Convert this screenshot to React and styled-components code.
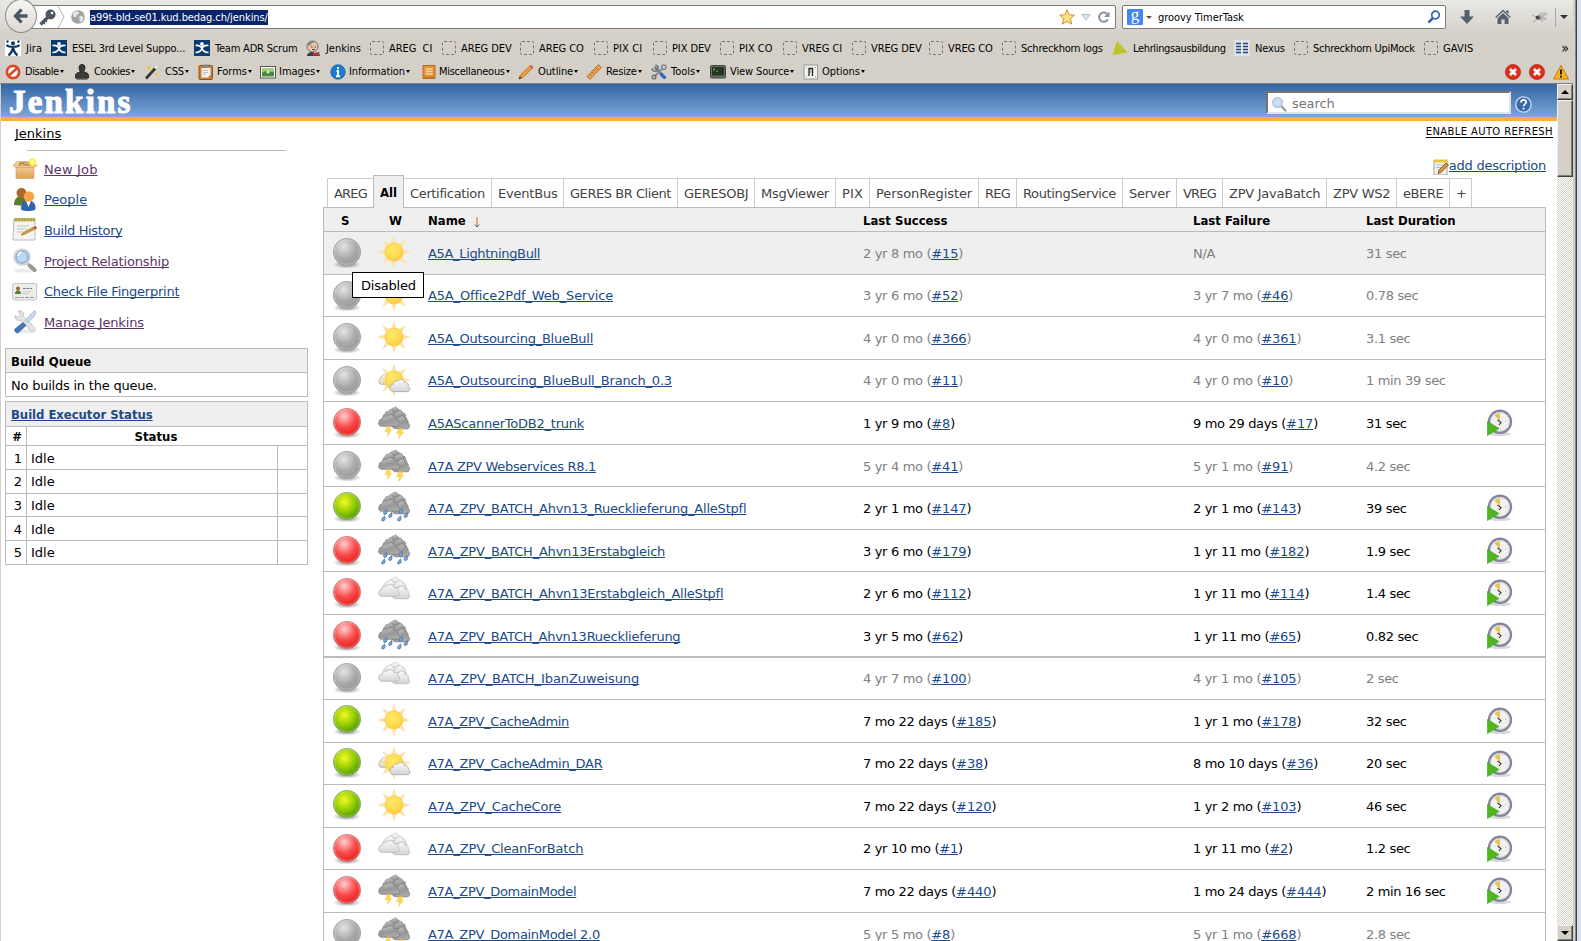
import React from "react";
import styled, { createGlobalStyle, css } from "styled-components";

const UI_FONT = `"DejaVu Sans Condensed", "DejaVu Sans", sans-serif`;
const PAGE_FONT = `Verdana, "DejaVu Sans", sans-serif`;

const GlobalStyle = createGlobalStyle`
  * { box-sizing: border-box; }
  html, body { margin: 0; padding: 0; overflow: hidden; }
  body { background: #d4d0c8; }
  svg { display: block; flex: none; }
`;

const strong = css`
  font-family: ${UI_FONT};
  font-weight: bold;
  letter-spacing: 0;
`;

/* ---------- window frame ---------- */
const Window = styled.div`
  display: flex;
  width: 1581px;
  height: 941px;
  overflow: hidden;
  background: #d4d0c8;
`;
const Browser = styled.div`
  width: 1573px;
  display: flex;
  flex-direction: column;
`;
const WindowEdge = styled.div`
  width: 8px;
  border-left: 2px solid #d4d0c8;
  background: linear-gradient(to right, #8d8a84 0 1px, #404040 1px 2px, #d6def2 2px);
`;

/* ---------- navigation bar ---------- */
const NavBar = styled.div`
  height: 36px;
  flex: none;
  display: flex;
  align-items: flex-start;
  background: linear-gradient(#e9e8e5, #d4d0c8);
  font: 11px ${UI_FONT};
  color: #000;
`;
const BackButton = styled.div`
  width: 32px;
  height: 34px;
  margin: -1px -17px 0 5px;
  border-radius: 50%;
  border: 1px solid #8c8a86;
  background: linear-gradient(#f7f6f5, #dddad5);
  display: flex;
  align-items: center;
  justify-content: center;
  z-index: 1;
`;
const Field = styled.div`
  height: 24px;
  margin-top: 5px;
  border: 1px solid #7c7c7c;
  border-radius: 2px;
  background: #fff;
  display: flex;
  align-items: center;
  width: ${(p) => p.$w}px;
  padding: ${(p) => p.$pad};
`;
const Selected = styled.span`
  background: #0a246a;
  color: #fff;
  line-height: 15px;
  height: 15px;
  letter-spacing: -0.08px;
  margin-left: 3px;
  white-space: nowrap;
`;
const Query = styled.span`
  flex: 1;
  margin-left: 6px;
  letter-spacing: -0.05px;
`;
const NavIcons = styled.div`
  display: flex;
  align-items: center;
  height: 34px;
  margin-left: 13px;
`;
const Gap = styled.span`
  flex: ${(p) => (p.$w ? `0 0 ${p.$w}px` : 1)};
`;
const Divider = styled.span`
  width: 1px;
  height: 19px;
  background: #a9a6a0;
`;

/* ---------- bookmark and developer bars ---------- */
const Strip = styled.div`
  height: ${(p) => p.$h}px;
  flex: none;
  display: flex;
  align-items: center;
  padding-left: 5px;
  background: #d4d0c8;
  font: 11px ${UI_FONT};
  color: #000;
`;
const StripItem = styled.div`
  width: ${(p) => p.$w}px;
  flex: none;
  display: flex;
  align-items: center;
  white-space: pre;
  letter-spacing: ${(p) => p.$track || 0}px;
`;
const Slot = styled.span`
  width: ${(p) => p.$w}px;
  flex: none;
  display: flex;
`;
const Caret = styled.span`
  margin-left: 1px;
  border: 2.5px solid transparent;
  border-top: 3px solid #000;
  border-bottom: 0;
`;
const Blank = styled.span`
  width: 14px;
  height: 14px;
  border: 1px dashed #777;
  border-radius: 2px;
`;
const More = styled.span`
  margin-left: auto;
  margin-right: 4px;
  font-size: 14px;
  line-height: 14px;
`;

/* ---------- viewport ---------- */
const Viewport = styled.div`
  flex: 1;
  min-height: 0;
  display: flex;
  border-top: 1px solid #808080;
`;
const Page = styled.div`
  width: 1557px;
  border-left: 1px solid #d4d0c8;
  background: #fff;
  overflow: hidden;
  font: 13px ${PAGE_FONT};
  color: #000;
  position: relative;
`;
const ScrollBar = styled.div`
  width: 16px;
  display: flex;
  flex-direction: column;
  background: repeating-conic-gradient(#fff 0 25%, #d4d0c8 0 50%) 0 0 / 2px 2px;
`;
const raised = css`
  background: #d4d0c8;
  border: 1px solid;
  border-color: #f4f2ee #404040 #404040 #f4f2ee;
  box-shadow: inset -1px -1px #808080;
`;
const ScrollButton = styled.div`
  ${raised}
  height: 16px;
  flex: none;
  display: flex;
  align-items: center;
  justify-content: center;
`;
const Thumb = styled.div`
  ${raised}
  height: 77px;
  margin-bottom: auto;
`;
const Arrow = styled.span`
  border: 4px solid transparent;
  ${(p) => (p.$up ? "border-bottom-color: #000; margin-top: -4px;" : "border-top-color: #000; margin-bottom: -4px;")}
`;

const Header = styled.header`
  height: 37px;
  border-bottom: 4px solid #fcaf3e;
  background: linear-gradient(#3465a4, #729fcf 88%, #8fa3da);
  display: flex;
  align-items: flex-start;
`;
const Logo = styled.div`
  padding-left: 8px;
  font: bold 33px/37px "Liberation Serif", serif;
  height: 33px;
  letter-spacing: 2.2px;
  color: #fff;
  -webkit-text-stroke: 1.1px #fff;
  flex: 1;
`;
const SearchBox = styled.div`
  width: 245px;
  height: 23px;
  margin-top: 7px;
  background: #fff;
  border: 2px solid;
  border-color: #75736e #e6e3dd #e6e3dd #75736e;
  display: flex;
  align-items: center;
  padding: 2px 0 0 3px;
  gap: 5px;
  line-height: 17px;
  letter-spacing: -0.1px;
  color: #777;
`;
const HelpSlot = styled.div`
  margin: 12px 25px 0 4px;
`;

const Crumbs = styled.div`
  height: 29px;
  display: flex;
  justify-content: space-between;
  padding: 0 4px 0 14px;
`;
const Link = styled.a`
  color: ${(p) => p.$color || "#204a87"};
  text-decoration: underline;
  text-decoration-thickness: 1px;
  text-underline-offset: 1px;
  text-decoration-skip-ink: none;
  white-space: nowrap;
  letter-spacing: ${(p) => p.$track || 0}px;
`;
const CrumbLink = styled(Link)`
  line-height: 25px;
`;
const RefreshLink = styled(Link)`
  font-size: 10px;
  line-height: 21px;
  text-underline-offset: 2px;
`;

const Columns = styled.div`
  display: flex;
`;
const Side = styled.aside`
  width: 322px;
  flex: none;
`;
const Rule = styled.div`
  height: 1px;
  width: 259px;
  margin-left: 26px;
  background: #bbb;
`;
const Tasks = styled.div`
  padding: 3px 0 0 11px;
  height: 197px;
`;
const Task = styled.div`
  height: 30.6px;
  display: flex;
  align-items: center;
  gap: 6px;
`;

const Panel = styled.section`
  width: 303px;
  margin: 0 0 4px 4px;
  border: 1px solid #bbb;
`;
const PanelHead = styled.div`
  ${strong}
  height: ${(p) => p.$h}px;
  background: #efefef;
  border-bottom: 1px solid #bbb;
  padding: 1px 0 0 5px;
  display: flex;
  align-items: center;
`;
const PanelText = styled.div`
  height: 23px;
  padding: 2px 0 0 5px;
  display: flex;
  align-items: center;
  letter-spacing: -0.22px;
`;
const ExecRow = styled.div`
  display: grid;
  grid-template-columns: ${(p) => (p.$head ? "20px 1fr" : "20px 1fr 30px")};
  height: ${(p) => p.$h}px;
  line-height: 15px;
  ${(p) => p.$head && strong}
  & + & { border-top: 1px solid #bbb; }
`;
const ExecCell = styled.div`
  border-left: ${(p) => (p.$first ? 0 : 1)}px solid #bbb;
  padding: ${(p) => p.$top}px ${(p) => (p.$center ? 26 : 4)}px 0 4px;
  text-align: ${(p) => (p.$first ? "right" : p.$center ? "center" : "left")};
`;

const Main = styled.main`
  width: 1223px;
`;
const Description = styled.div`
  height: 25px;
  display: flex;
  justify-content: flex-end;
  padding-top: 9px;
  line-height: 13px;
`;
const Tabs = styled.div`
  height: 32px;
  display: flex;
  align-items: flex-end;
  padding-left: 4px;
`;
const Tab = styled.div`
  width: ${(p) => p.$w}px;
  height: 29px;
  border-top: 1px solid #ccc;
  border-left: ${(p) => (p.$bare ? 0 : 1)}px solid #ccc;
  border-right: ${(p) => (p.$last ? 1 : 0)}px solid #ccc;
  padding: 0 0 0 6px;
  display: flex;
  align-items: center;
  white-space: nowrap;
  color: #444;
  letter-spacing: ${(p) => p.$track || 0}px;
  ${(p) =>
    p.$active &&
    css`
      ${strong}
      height: 33px;
      margin-bottom: -1px;
      border: 1px solid #bbb;
      border-bottom: 0;
      background: #efefef;
      color: #000;
      z-index: 1;
    `}
`;
const Table = styled.div`
  border: 1px solid #bbb;
  border-bottom: 0;
`;
const cols = css`
  display: grid;
  grid-template-columns: 47px 57px 435px 330px 173px 120px 1fr;
`;
const HeadRow = styled.div`
  ${cols}
  ${strong}
  align-items: center;
  height: 24px;
  padding-top: 1px;
  background: #efefef;
  border-bottom: 1px solid #bbb;
`;
const HeadCell = styled.div`
  padding-left: ${(p) => p.$pad || 0}px;
  display: flex;
  gap: 8px;
`;
const JobRow = styled.div`
  ${cols}
  height: ${(p) => p.$h}px;
  border-bottom: ${(p) => p.$line || 1}px solid #bbb;
  background: ${(p) => (p.$hot ? "#efefef" : "#fff")};
  color: ${(p) => (p.$off ? "#808080" : "#000")};
`;
const IconCell = styled.div`
  padding: ${(p) => p.$top}px 0 0 ${(p) => p.$left}px;
`;
const Cell = styled.div`
  padding-top: ${(p) => p.$top}px;
  line-height: 15px;
  white-space: nowrap;
  letter-spacing: -0.33px;
`;
const Tip = styled.div`
  position: absolute;
  left: 351px;
  top: 188px;
  width: 72px;
  height: 26px;
  border: 1px solid #000;
  background: #fff;
  display: flex;
  align-items: center;
  padding: 1px 0 0 8px;
  letter-spacing: -0.2px;
  z-index: 2;
`;

/* ---------- drawings ---------- */
const HiddenSvg = styled.svg`
  position: absolute;
`;
const Defs = () => (
  <HiddenSvg width="0" height="0">
    <defs>
      <radialGradient id="grey" cx=".38" cy=".3" r=".75">
        <stop offset="0" stopColor="#e4e4e4" /><stop offset=".6" stopColor="#a8a8a8" /><stop offset="1" stopColor="#969696" />
      </radialGradient>
      <radialGradient id="red" cx=".4" cy=".28" r=".75">
        <stop offset="0" stopColor="#ffd0d0" /><stop offset=".55" stopColor="#f94a4a" /><stop offset="1" stopColor="#e31e1e" />
      </radialGradient>
      <radialGradient id="green" cx=".4" cy=".35" r=".72">
        <stop offset="0" stopColor="#f4f822" /><stop offset=".5" stopColor="#97cf06" /><stop offset="1" stopColor="#439000" />
      </radialGradient>
      <radialGradient id="shade">
        <stop offset="0" stopColor="#000" stopOpacity=".5" /><stop offset="1" stopColor="#000" stopOpacity="0" />
      </radialGradient>
      <radialGradient id="sun" cx=".4" cy=".35" r=".7">
        <stop offset="0" stopColor="#ffe96b" /><stop offset=".7" stopColor="#fed94c" /><stop offset="1" stopColor="#fdc040" />
      </radialGradient>
      <linearGradient id="light" x2="0" y2="1">
        <stop offset="0" stopColor="#fafafa" /><stop offset="1" stopColor="#d4d4d4" />
      </linearGradient>
      <linearGradient id="dark" x1=".1" x2=".5" y2="1">
        <stop offset="0" stopColor="#cacac8" /><stop offset=".6" stopColor="#979795" /><stop offset="1" stopColor="#aaaaa8" />
      </linearGradient>
      <linearGradient id="box" x2="0" y2="1">
        <stop offset="0" stopColor="#f3cd92" /><stop offset="1" stopColor="#d9a055" />
      </linearGradient>
    </defs>
  </HiddenSvg>
);

const Ball = ({ color }) => (
  <svg width="32" height="34" viewBox="0 0 32 34">
    <ellipse cx="16" cy="28.5" rx="14" ry="4" fill="url(#shade)" />
    <circle cx="16" cy="16" r="13.6" fill={`url(#${color})`} stroke={color === "green" ? "#8fa878" : color === "red" ? "#c98585" : "#a2a2a2"} strokeWidth=".9" />
    <circle cx="16" cy="16" r="12.4" fill="none" stroke="#fff" strokeOpacity=".28" />
  </svg>
);

const Sun = () => (
  <g>
    {[0, 45, 90, 135, 180, 225, 270, 315].map((a) => (
      <path key={a} d="M13.6 8 16 .2 18.4 8Z" fill="#fde3a4" stroke="#fbdca0" strokeWidth=".5" transform={`rotate(${a} 16 16)`} />
    ))}
    <circle cx="16" cy="16" r="9" fill="url(#sun)" stroke="#fbc65a" strokeWidth=".8" />
  </g>
);
const Puff = ({ at, fill, stroke }) => (
  <path
    transform={at}
    fill={`url(#${fill})`}
    stroke={stroke}
    strokeWidth=".8"
    d="M4 12.5C.8 12.5-.2 10 .8 8.2.8 6.2 2 5.2 3.6 5.6 3.4 3 6 1.6 7.8 2.6 9.4-.2 14 .4 14.4 3.8 17 3.4 18.6 5.4 18 7.6 20.6 9 19.8 12.5 17 12.5Z"
  />
);
const Clouds = ({ fill, stroke }) => (
  <g>
    <Puff at="translate(11 .4) scale(.6 .7)" fill={fill} stroke={stroke} />
    <Puff at="translate(4.5 3) scale(.75 .95)" fill={fill} stroke={stroke} />
    <Puff at="translate(14 3.5) scale(.75 .95)" fill={fill} stroke={stroke} />
    <Puff at="translate(14 9) scale(.9 1.1)" fill={fill} stroke={stroke} />
    <Puff at="translate(.2 7.8) scale(1.1 1)" fill={fill} stroke={stroke} />
  </g>
);
const Weather = ({ kind }) => (
  <svg width="33" height="33" viewBox="0 0 33 33">
    {kind === "sun" && <Sun />}
    {kind === "partly" && (
      <g>
        <Puff at="translate(.4 8.5) scale(.8 .95)" fill="light" stroke="#aaa" />
        <Sun />
        <Puff at="translate(11.5 14.5) scale(1.04 1.05)" fill="light" stroke="#a8a8a8" />
      </g>
    )}
    {kind === "cloudy" && <Clouds fill="light" stroke="#b8b8b8" />}
    {(kind === "storm" || kind === "rain") && <Clouds fill="dark" stroke="#7f7f7d" />}
    {kind === "storm" && (
      <g fill="#fddb4c" stroke="#f6c052" strokeWidth=".5">
        <path d="M9.5 20.5h3.2L11.5 24h2L9.3 30.5l1-4.7H7.2Z" />
        <path d="M21 22.8h4l-1.7 3.2h2.2L20.6 32.5l1-4.8H18.5Z" />
      </g>
    )}
    {kind === "rain" && (
      <g fill="#7ea6dc" stroke="#3f6aa8" strokeWidth=".7">
        {[[4, 26], [11, 22.5], [20, 26], [26.5, 22.5], [6, 19.5], [21.5, 18.5]].map(([x, y]) => (
          <path key={x} d={`M${x + 2.6} ${y - 1}c1 2.6.3 5-1.6 5s-2.4-2 1.6-5Z`} />
        ))}
      </g>
    )}
  </svg>
);
const Schedule = () => (
  <svg width="28" height="28" viewBox="0 0 28 28">
    <ellipse cx="14" cy="25" rx="11" ry="2" fill="#000" opacity=".15" />
    <circle cx="14" cy="12.8" r="11" fill="#f1f1ee" stroke="#84849c" strokeWidth="2.4" />
    <circle cx="14" cy="12.8" r="9.4" fill="none" stroke="#d3d3dc" strokeWidth="1" />
    <path d="M14 12 8.5 6.5A8.5 8.5 0 0 1 14 4Z" fill="#e3c45c" />
    <path d="m11.500 11 3.500 2.500-2 2.500" stroke="#333" strokeWidth="1.100" fill="none" />
    <circle cx="19.5" cy="12.5" r=".4" fill="#777" /><circle cx="14" cy="19.5" r=".4" fill="#777" />
    <path d="M1.5 12.500v14l11.500-7Z" fill="#4cb81c" stroke="#3f9a1a" strokeWidth=".6" />
  </svg>
);

const taskIcons = {
  box: (
    <>
      <path d="M4 11h18v11.500H4Z" fill="url(#box)" stroke="#d0a060" strokeWidth=".6" />
      <path d="M4 11.500.8 9.500 5 5.500h16l4.200 4-3.200 2Z" fill="#efc88e" stroke="#d0a060" strokeWidth=".6" />
      <path d="M6.500 9.500 8 6.500h11l1.500 3Z" fill="#a8733a" />
      <path d="M8.500 8.800h3l1-1h5" stroke="#ecd8b8" fill="none" />
      <circle cx="20.500" cy="6" r="3.800" fill="#fff04a" /><circle cx="20.500" cy="6" r="1.800" fill="#fffbb0" />
    </>
  ),
  people: (
    <>
      <path d="M2 18c0-6 3-9 7-8.500s5 3 5 9.500Z" fill="#5b7d2c" />
      <circle cx="9.500" cy="6" r="5" fill="#a8692a" />
      <path d="M9 22.500c0-6 2-9 7-9s8 3 7.500 9c-4 2-11 2-14.500 0Z" fill="#2f66ae" />
      <path d="m14 14 2.500 6L19 14Z" fill="#fff" />
      <circle cx="17" cy="9.500" r="5.200" fill="#f5a447" />
    </>
  ),
  notes: (
    <>
      <path d="M2 2h21v21H1Z" fill="#f4f4f2" stroke="#bbb" />
      <path d="M2 1h21v3.500H2Z" fill="#c6bb62" />
      <path d="M4 1v3M7 1v3M10 1v3M13 1v3M16 1v3M19 1v3M22 1v3" stroke="#97903e" />
      <path d="M5 9h12M5 12h10M5 15h7" stroke="#c4c4c4" />
      <path d="m9 18 2.500-2.500L21.500 10l1.500 2-10.500 5.300Z" fill="#e0a23c" stroke="#97692a" strokeWidth=".7" />
      <path d="m21.500 10 2-1 1.500 2-1.500 1.500Z" fill="#d33" />
    </>
  ),
  lens: (
    <>
      <ellipse cx="12" cy="22.500" rx="10" ry="2" fill="#000" opacity=".08" />
      <path d="m15 15 3 3" stroke="#c4c6ca" strokeWidth="3.500" /><path d="m18 18 4.500 4" stroke="#999" strokeWidth="4.200" strokeLinecap="round" />
      <circle cx="10" cy="9" r="7.500" fill="#bcd6f3" stroke="#d0d2d6" strokeWidth="2.400" />
      <circle cx="10" cy="9" r="6" fill="none" stroke="#6f94c4" strokeWidth=".9" />
      <path d="M6 8a4.500 4.500 0 0 1 4-4" stroke="#fff" strokeWidth="1.500" fill="none" />
    </>
  ),
  card: (
    <>
      <rect x=".7" y="4.500" width="24" height="16.500" rx="1.500" fill="#eceeed" stroke="#c2c2c2" />
      <circle cx="6" cy="9.500" r="2" fill="#9a6a32" /><path d="M3 15c0-5 6-5 6 0Z" fill="#5e7c2c" />
      <path d="M11 9.500h10" stroke="#777" strokeWidth="1.200" strokeDasharray="2.500 .8" />
      <path d="M11 12.500h8M11 14.500h6" stroke="#ccc" />
      <path d="M3 18.500h19" stroke="#999" strokeDasharray="4 1" />
    </>
  ),
  tools: (
    <>
      <ellipse cx="13" cy="22.500" rx="11" ry="2" fill="#000" opacity=".08" />
      <path d="M6 2c4-1 6.500 2 5.500 5.500L22.500 18.500c1.500 2-1 5-3.500 3.500L9 11C5.500 12.500 2.500 10 3 6.500L6 8.500 8.500 6Z" fill="#e3e5e5" stroke="#b8b8b8" strokeWidth=".8" />
      <path d="m22.500 1.500 1.500 1.500-1.500 4-7 7-2.500-2.500 6.500-7Z" fill="#c9d9ec" stroke="#a3b4cb" strokeWidth=".8" />
      <path d="m11 13.500 3 3-7.500 7c-2 1-4.500-1-3.500-3.500Z" fill="#4677b9" stroke="#2b5796" strokeWidth=".7" />
    </>
  ),
};
const TaskIcon = ({ name }) => <svg width="26" height="26" viewBox="0 0 26 26">{taskIcons[name]}</svg>;

const smallIcons = {
  jira: (
    <>
      <rect width="16" height="16" fill="#fff" />
      <path d="M1.500 5C4 7.500 12 7.500 14.500 5M8 7.500C7.500 11 6 13.500 3.500 15.500M8 7.500c.5 3.500 2 6 4.500 8" fill="none" stroke="#123a66" strokeWidth="2.200" />
      <g fill="#123a66"><circle cx="8" cy="3.200" r="2" /><circle cx="2.500" cy="1.500" r="1.200" /><circle cx="13.500" cy="1.500" r="1.200" /></g>
    </>
  ),
  team: (
    <>
      <rect width="16" height="16" fill="#0b3a70" />
      <path d="M1.500 5.500C5 5 7 6.500 8 8c1-1.500 3-3 6.500-2.500M1.500 12.500C5 12.500 7 11 8 8.500c1 2.500 3 4 6.500 4" fill="none" stroke="#fff" strokeWidth="1.700" />
      <circle cx="8" cy="4" r="1.900" fill="#fff" />
    </>
  ),
  butler: (
    <>
      <circle cx="7.500" cy="6.500" r="5.500" fill="#e8c5a8" stroke="#555" strokeWidth=".8" />
      <path d="M2.500 5C3 1 8 0 11 2c-3 0-5 1-6 4Z" fill="#888" />
      <path d="M2 16c0-3 3-4 5-4l3 1 4-1 1 4Z" fill="#33404f" />
      <path d="m8 12 3 1.500L14 12v4l-3-1-3 1Z" fill="#d43030" />
      <path d="M6 7h1.500M9.500 7H11M7 9.500h3" stroke="#444" />
    </>
  ),
  triangle: <path d="M5 1 15.500 12.500.5 15Z" fill="#c0c22c" />,
  nexus: (
    <>
      <rect width="16" height="16" fill="#dfe3e6" />
      <path d="M2 3.500h5M2 6.500h5M2 9.500h5M2 12.500h5M9 3.500h5M9 6.500h5M9 9.500h5M9 12.500h5" stroke="#1c4a7a" strokeWidth="1.500" />
    </>
  ),
  disable: (
    <>
      <circle cx="8" cy="8" r="7.500" fill="#dc4a2a" />
      <circle cx="8" cy="8" r="4.800" fill="#fff" />
      <path d="M3.800 11.500 12 4.200" stroke="#dc4a2a" strokeWidth="2.600" />
    </>
  ),
  cookies: <path d="M5 3.500a3 3 0 0 1 6 0c0 2-1.200 3-1.200 4.500 2.500.8 4.700 1 4.700 3.500V14h-13v-2.500C1.500 9 3.700 8.800 6.200 8 6.200 6.500 5 5.500 5 3.500ZM2.500 15h11" fill="#3a3a38" stroke="#2a2a28" />,
  css: (
    <>
      <path d="M2 14.500 12.500 3" stroke="#333" strokeWidth="2.600" /><path d="m11 4.500 2-2.200" stroke="#fff" strokeWidth="2.400" />
      <path d="m5 1 .8 2.200L8 4l-2.200.8L5 7l-.8-2.200L2 4l2.200-.8ZM13 8l.6 1.600 1.600.6-1.600.6L13 12.500l-.6-1.700-1.600-.6 1.600-.6Z" fill="#f3c524" />
    </>
  ),
  forms: (
    <>
      <rect x="1" y="1.500" width="13.500" height="14" rx="1" fill="#cd7f32" stroke="#8f521b" />
      <path d="M3.500 4h9v6.500l-2.500 3H3.500Z" fill="#f2f2f0" /><rect x="5" y=".5" width="6" height="3" fill="#888" />
      <path d="M5 6.500h5M5 8.500h5M5 10.500h3" stroke="#aaa" strokeWidth=".8" />
    </>
  ),
  images: (
    <>
      <rect x=".5" y="2.500" width="15" height="11.500" fill="#fff" stroke="#555" />
      <rect x="2" y="4" width="12" height="8.500" fill="#4b8a3a" /><path d="M2 4h12v3.500c-4 1-8-2-12 1Z" fill="#a5cf7c" /><circle cx="8" cy="8" r="1.500" fill="#fff" opacity=".8" />
    </>
  ),
  info: (
    <>
      <circle cx="8" cy="8" r="7.200" fill="#1b7cd0" stroke="#0e5ca5" strokeWidth=".8" />
      <path d="M8 3v2.200M6.500 7H8v5M6 12.200h4.200" stroke="#fff" strokeWidth="1.900" fill="none" />
    </>
  ),
  misc: (
    <>
      <rect x="2" y="1.500" width="12" height="13" fill="#e0913a" stroke="#b56a22" />
      <path d="M4.500 5h7M4.500 7.500h7M4.500 10h7" stroke="#f8d29a" strokeWidth="1.400" /><path d="M3 13h10" stroke="#b8691e" />
    </>
  ),
  outline: (
    <>
      <path d="m1 15 1.500-4L11.800 2l2.300 2.300L5 13.500Z" fill="#f0a23a" stroke="#a9611c" strokeWidth=".8" /><path d="m11.500 2.200 1.500-1.500 2.500 2.500L14 4.700Z" fill="#d65a5a" /><path d="m1 15 .8-2.500L3.500 14Z" fill="#222" />
    </>
  ),
  resize: (
    <>
      <path d="m1 12.500 11.500-12 3 3L4 15.500Z" fill="#e8a050" stroke="#a9611c" strokeWidth=".8" /><path d="m4 10 1.500 1.500M6 8l1.500 1.500M8 6l1.500 1.500M10 4l1.500 1.500" stroke="#a9611c" strokeWidth=".8" />
    </>
  ),
  tools: (
    <>
      <path d="M3.500 3 13 13" stroke="#6d7780" strokeWidth="2.200" /><path d="M1.200 4.200a3 3 0 1 0 3-3" stroke="#6d7780" strokeWidth="1.600" fill="none" />
      <path d="M13 13l1.500 1.500" stroke="#2b6bc0" strokeWidth="3" /><path d="m9.500 9.500 4 4" stroke="#2b6bc0" strokeWidth="3.200" />
      <path d="m12 4-8.500 8.500" stroke="#818b94" strokeWidth="2" /><circle cx="12.800" cy="3.200" r="2.200" fill="none" stroke="#818b94" strokeWidth="1.500" /><circle cx="3" cy="13" r="1.800" fill="none" stroke="#6d7780" strokeWidth="1.500" />
    </>
  ),
  source: (
    <>
      <rect x=".5" y="1.500" width="15" height="12.500" rx="1" fill="#667066" stroke="#444" />
      <rect x="2" y="3" width="12" height="8.500" fill="#26361f" /><path d="m3 4.500 2 1-2 1M6 7.200h2" stroke="#79c64c" fill="none" strokeWidth=".8" />
    </>
  ),
  options: (
    <>
      <rect x="1" y="1" width="13.500" height="14" fill="#f2f2f0" stroke="#9a9a9a" />
      <path d="M6 12V4.500h3.500V12" stroke="#222" strokeWidth="1.300" fill="none" /><path d="M7.800 5v4" stroke="#999" /><path d="M3 3v1M12.500 3v1M3 12v1M12.500 12v1" stroke="#999" />
    </>
  ),
  error: (
    <>
      <circle cx="8" cy="8" r="7.600" fill="#dd2c18" stroke="#b01808" strokeWidth=".6" />
      <path d="m5 5 6 6m0-6-6 6" stroke="#fff" strokeWidth="2.800" />
    </>
  ),
  warn: (
    <>
      <path d="M8 1.500 15.500 15H.5Z" fill="#fbb324" stroke="#c67608" strokeLinejoin="round" /><path d="M8 5.500v5M8 11.800v1.600" stroke="#111" strokeWidth="1.800" />
    </>
  ),
  star: <path d="m8 .8 2.200 4.900 5.200.5-3.900 3.600 1.100 5.300L8 12.400l-4.600 2.700 1.100-5.300L.6 6.200l5.200-.5Z" fill="#ffdf80" stroke="#d08f35" />,
  globe: (
    <>
      <circle cx="8" cy="8" r="6.800" fill="#a2a2a2" />
      <path d="M3 4c2-2 5-2 6-.5S7 5 6.500 7s-3 1-3.500 0ZM9.500 7c2-1 4 .5 4 2s-2 4-3 4-1.500-4-1-6Z" fill="#e6e6e6" />
    </>
  ),
  search: (
    <>
      <path d="m9.500 9.500 5 5" stroke="#9a9a9a" strokeWidth="2.400" strokeLinecap="round" /><circle cx="6.500" cy="6.500" r="4.800" fill="#c8def5" stroke="#b5c3d6" strokeWidth="1.500" />
    </>
  ),
  edit: (
    <>
      <path d="M1 1.500h13V16H1Z" fill="#f3f3ef" stroke="#888" strokeWidth=".8" /><path d="M1 .5h13.500v3H1Z" fill="#e8c63c" />
      <path d="M3 6h8M3 8.500h6" stroke="#aaa" strokeWidth=".8" /><path d="m5 14.500 1-3.500L13 4l2.500 2L8 13.500Z" fill="#d79a3c" stroke="#6f4d1a" strokeWidth=".8" />
    </>
  ),
  help: (
    <>
      <circle cx="8" cy="8" r="7.200" fill="#3868a8" stroke="#c8d8ee" strokeWidth="1.300" />
      <path d="M5.600 6.200c0-3.400 5-3.200 5-.3 0 1.800-2.500 1.800-2.500 3.700M8.100 11v1.700" stroke="#fff" strokeWidth="1.600" fill="none" />
    </>
  ),
};
const Small = ({ name, size = 16 }) => <svg width={size} height={size} viewBox="0 0 16 16">{smallIcons[name]}</svg>;

const BackArrow = () => (
  <svg width="16" height="16" viewBox="0 0 16 16"><path d="M8.500 1.500 2.500 8l6 6.500M3 8h11.500" stroke="#4d5763" strokeWidth="3.300" fill="none" /></svg>
);
const KeyIcon = () => (
  <svg width="17" height="17" viewBox="0 0 17 17"><path d="M9 8 1.500 15.500" stroke="#4f5661" strokeWidth="3.200" /><path d="m4 13 2 2M6 11l2 2" stroke="#4f5661" strokeWidth="1.500" /><circle cx="11.500" cy="5.500" r="5" fill="#4f5661" /><circle cx="13" cy="4" r="1.300" fill="#fff" /></svg>
);
const Chevron = () => (
  <svg width="8" height="22" viewBox="0 0 8 22"><path d="m1 0 6 11-6 11" stroke="#b4b4b4" fill="none" /></svg>
);
const DropTri = ({ color, w = 5 }) => (
  <svg width={w * 2} height={w} viewBox="0 0 10 5"><path d="M0 0h10L5 5Z" fill={color} /></svg>
);
const DropOutline = () => (
  <svg width="10" height="7" viewBox="0 0 10 7"><path d="M.8.5h8.400L5 6Z" fill="#dfe3ea" stroke="#b5bcc7" /></svg>
);
const Reload = () => (
  <svg width="13" height="13" viewBox="0 0 13 13"><path d="M10.800 8.200a4.600 4.600 0 1 1-.6-5" stroke="#8b93a0" strokeWidth="2" fill="none" /><path d="M12.500.5v5.500H7Z" fill="#8b93a0" /></svg>
);
const GoogleMark = styled.span`
  width: 16px;
  height: 16px;
  background: #4486f4;
  color: #fff;
  border-radius: 1px;
  font: 17px/12px "Liberation Serif", serif;
  text-align: center;
`;
const FindIcon = () => (
  <svg width="14" height="14" viewBox="0 0 14 14"><path d="m6 8-4.500 4.500" stroke="#3468ac" strokeWidth="2.500" /><circle cx="8.500" cy="5" r="3.800" fill="#fff" stroke="#3468ac" strokeWidth="1.700" /></svg>
);
const DownIcon = () => (
  <svg width="14" height="14" viewBox="0 0 14 14"><path d="M4.500 0h5v6.500H14L7 14 0 6.500h4.500Z" fill="#55606e" /></svg>
);
const HomeIcon = () => (
  <svg width="16" height="16" viewBox="0 0 16 16"><path d="M8 .5 15.800 8l-1 1L8 2.500 1.200 9l-1-1ZM11 1.500h2.500V5L11 2.800ZM8 4l5.500 5.200V15H9.600v-4.500H6.400V15H2.500V9.200Z" fill="#55606e" /></svg>
);
const FlyIcon = () => (
  <svg width="17" height="12" viewBox="0 0 17 12"><path d="M5 6 1 4M6 8l-4 3M9 8l3 3M8 5l2-4" stroke="#999" fill="none" strokeWidth=".8" /><ellipse cx="7.500" cy="6.500" rx="2.800" ry="2" fill="#444" /><path d="M8 6c2-3 5-5 8-3.500-1 2-4 3.500-8 3.500ZM8 7c3-1 6-.5 7.500 1-2 1-5 .5-7.500-1Z" fill="#c5c3be" stroke="#999" strokeWidth=".5" /></svg>
);
const SortSlot = styled.span`
  padding-top: 4px;
`;
const SortArrow = () => (
  <SortSlot>
    <svg width="6" height="11" viewBox="0 0 6 11"><path d="M3 0v9.500" stroke="#d98a2e" strokeWidth="1.300" /><path d="M.8 7.500 3 10l2.200-2.500" stroke="#4b5f8f" fill="none" /></svg>
  </SortSlot>
);

/* ---------- data: icon, label, width up to the next item, letter spacing ---------- */
const bookmarks = [
  ["jira", "Jira", 46, 0.1], ["team", "ESEL 3rd Level Suppo...", 143, -0.15], ["team", "Team ADR Scrum", 111, -0.2], ["butler", "Jenkins", 65, -0.05],
  [null, "AREG  CI", 72, -0.05], [null, "AREG DEV", 78, -0.1], [null, "AREG CO", 74, -0.1], [null, "PIX CI", 59, 0.1], [null, "PIX DEV", 67, -0.1],
  [null, "PIX CO", 63, 0], [null, "VREG CI", 69, -0.05], [null, "VREG DEV", 77, -0.1], [null, "VREG CO", 73, -0.1], [null, "Schreckhorn logs", 110, -0.2],
  ["triangle", "Lehrlingsausbildung", 122, -0.35], ["nexus", "Nexus", 60, -0.15], [null, "Schreckhorn UpiMock", 130, -0.27], [null, "GAVIS", 60, 0.15],
];
const devTools = [
  ["disable", "Disable", 69, 20, -0.45], ["cookies", "Cookies", 70, 20, -0.4], ["css", "CSS", 54, 21, -0.2], ["forms", "Forms", 62, 19, 0],
  ["images", "Images", 70, 19, 0], ["info", "Information", 91, 19, -0.12], ["misc", "Miscellaneous", 97, 18, -0.28], ["outline", "Outline", 68, 20, -0.1],
  ["resize", "Resize", 65, 20, -0.15], ["tools", "Tools", 59, 20, 0], ["source", "View Source", 93, 20, -0.12], ["options", "Options", 70, 19, -0.05],
];
const tasks = [
  ["box", "New Job", true, 0.15], ["people", "People", false, 0], ["notes", "Build History", false, -0.35],
  ["lens", "Project Relationship", true, -0.17], ["card", "Check File Fingerprint", false, -0.24], ["tools", "Manage Jenkins", true, -0.15],
];
const tabs = [
  ["AREG", 46, -0.8], ["All", 31, 0], ["Certification", 87, -0.35], ["EventBus", 72, -0.2], ["GERES BR Client", 114, -0.45], ["GERESOBJ", 77, -0.3],
  ["MsgViewer", 81, -0.28], ["PIX", 34, 0.2], ["PersonRegister", 109, -0.08], ["REG", 38, -0.7], ["RoutingService", 106, -0.35], ["Server", 54, -0.25],
  ["VREG", 46, -0.8], ["ZPV JavaBatch", 104, -0.25], ["ZPV WS2", 70, -0.28], ["eBERE", 53, -0.4], ["+", 23, 0],
];
const jobs = [
  ["grey", "sun", "A5A_LightningBull", "2 yr 8 mo", "#15", "N/A", "", "31 sec", -0.33],
  ["grey", "sun", "A5A_Office2Pdf_Web_Service", "3 yr 6 mo", "#52", "3 yr 7 mo", "#46", "0.78 sec", -0.155],
  ["grey", "sun", "A5A_Outsourcing_BlueBull", "4 yr 0 mo", "#366", "4 yr 0 mo", "#361", "3.1 sec", -0.25],
  ["grey", "partly", "A5A_Outsourcing_BlueBull_Branch_0.3", "4 yr 0 mo", "#11", "4 yr 0 mo", "#10", "1 min 39 sec", -0.19],
  ["red", "storm", "A5AScannerToDB2_trunk", "1 yr 9 mo", "#8", "9 mo 29 days", "#17", "31 sec", -0.24],
  ["grey", "storm", "A7A ZPV Webservices R8.1", "5 yr 4 mo", "#41", "5 yr 1 mo", "#91", "4.2 sec", -0.31],
  ["green", "rain", "A7A_ZPV_BATCH_Ahvn13_Ruecklieferung_AlleStpfl", "2 yr 1 mo", "#147", "2 yr 1 mo", "#143", "39 sec", -0.21],
  ["red", "rain", "A7A_ZPV_BATCH_Ahvn13Erstabgleich", "3 yr 6 mo", "#179", "1 yr 11 mo", "#182", "1.9 sec", -0.22],
  ["red", "cloudy", "A7A_ZPV_BATCH_Ahvn13Erstabgleich_AlleStpfl", "2 yr 6 mo", "#112", "1 yr 11 mo", "#114", "1.4 sec", -0.22],
  ["red", "rain", "A7A_ZPV_BATCH_Ahvn13Ruecklieferung", "3 yr 5 mo", "#62", "1 yr 11 mo", "#65", "0.82 sec", -0.25],
  ["grey", "cloudy", "A7A_ZPV_BATCH_IbanZuweisung", "4 yr 7 mo", "#100", "4 yr 1 mo", "#105", "2 sec", -0.075],
  ["green", "sun", "A7A_ZPV_CacheAdmin", "7 mo 22 days", "#185", "1 yr 1 mo", "#178", "32 sec", -0.31],
  ["green", "partly", "A7A_ZPV_CacheAdmin_DAR", "7 mo 22 days", "#38", "8 mo 10 days", "#36", "20 sec", -0.29],
  ["green", "sun", "A7A_ZPV_CacheCore", "7 mo 22 days", "#120", "1 yr 2 mo", "#103", "46 sec", -0.12],
  ["red", "cloudy", "A7A_ZPV_CleanForBatch", "2 yr 10 mo", "#1", "1 yr 11 mo", "#2", "1.2 sec", -0.19],
  ["red", "storm", "A7A_ZPV_DomainModel", "7 mo 22 days", "#440", "1 mo 24 days", "#444", "2 min 16 sec", -0.31],
  ["grey", "storm", "A7A_ZPV_DomainModel 2.0", "5 yr 5 mo", "#8", "5 yr 1 mo", "#668", "2.8 sec", -0.31],
];
const rowHeights = [43, 42, 43, 42, 43, 42, 43, 42, 43, 43, 42, 43, 42, 43, 42, 43, 42];
const raisedText = [1, 3, 10, 12, 14];
const thickRow = 9;

const When = ({ text, build, top }) => (
  <Cell $top={top}>
    {text}
    {build && <> (<Link $track={-0.1}>{build}</Link>)</>}
  </Cell>
);

const Job = ({ job, index }) => {
  const [ball, weather, name, ok, okBuild, bad, badBuild, duration, track] = job;
  const top = raisedText.includes(index) ? 13 : 14;
  const iconTop = index === thickRow + 1 ? 3 : 4;
  return (
    <JobRow $h={rowHeights[index]} $line={index === thickRow ? 2 : 1} $hot={index === 0} $off={ball === "grey"}>
      <IconCell $top={ball === "green" ? 3 : iconTop} $left={7}><Ball color={ball} /></IconCell>
      <IconCell $top={iconTop} $left={7}><Weather kind={weather} /></IconCell>
      <Cell $top={top}><Link $track={track}>{name}</Link></Cell>
      <When text={ok} build={okBuild} top={top} />
      <When text={bad} build={badBuild} top={top} />
      <Cell $top={top}>{duration}</Cell>
      {ball !== "grey" && <IconCell $top={7} $left={0}><Schedule /></IconCell>}
    </JobRow>
  );
};

export default function App() {
  return (
    <Window>
      <GlobalStyle />
      <Defs />
      <Browser>
        <NavBar>
          <BackButton><BackArrow /></BackButton>
          <Field $w={1096} $pad="0 5px 0 18px">
            <KeyIcon /><Gap $w={1} /><Chevron /><Gap $w={5} /><Small name="globe" />
            <Gap $w={1} />
            <Selected>a99t-bld-se01.kud.bedag.ch/jenkins/</Selected>
            <Gap /><Small name="star" /><Gap $w={6} /><DropOutline /><Gap $w={6} /><Reload />
          </Field>
          <Gap $w={6} />
          <Field $w={324} $pad="0 4px">
            <GoogleMark>g</GoogleMark><Gap $w={3} /><DropTri color="#555" w={3} />
            <Query>groovy TimerTask</Query><FindIcon />
          </Field>
          <NavIcons>
            <Gap $w={1} /><DownIcon /><Gap $w={21} /><HomeIcon /><Gap $w={20} /><FlyIcon /><Gap $w={7} /><Divider /><Gap $w={4} />
            <DropTri color="#333" w={4} />
          </NavIcons>
        </NavBar>
        <Strip $h={24}>
          {bookmarks.map(([icon, label, w, track]) => (
            <StripItem key={label} $w={w} $track={track}>
              <Slot $w={icon ? 21 : 19}>{icon ? <Small name={icon} /> : <Blank />}</Slot>
              {label}
            </StripItem>
          ))}
          <More>»</More>
        </Strip>
        <Strip $h={23}>
          {devTools.map(([icon, label, w, slot, track]) => (
            <StripItem key={label} $w={w} $track={track}>
              <Slot $w={slot}><Small name={icon} /></Slot>
              {label}
              <Caret />
            </StripItem>
          ))}
          <Gap />
          <Small name="error" /><Gap $w={8} /><Small name="error" /><Gap $w={8} /><Small name="warn" /><Gap $w={4} />
        </Strip>
        <Viewport>
          <Page>
            <Header>
              <Logo>Jenkins</Logo>
              <SearchBox><Small name="search" />search</SearchBox>
              <HelpSlot><Small name="help" size={17} /></HelpSlot>
            </Header>
            <Crumbs>
              <CrumbLink $color="#000">Jenkins</CrumbLink>
              <RefreshLink $color="#000" $track={0.38}>ENABLE AUTO REFRESH</RefreshLink>
            </Crumbs>
            <Columns>
              <Side>
                <Rule />
                <Tasks>
                  {tasks.map(([icon, label, visited, track]) => (
                    <Task key={label}>
                      <TaskIcon name={icon} />
                      <Link $color={visited ? "#5c3566" : undefined} $track={track}>{label}</Link>
                    </Task>
                  ))}
                </Tasks>
                <Panel>
                  <PanelHead $h={24}>Build Queue</PanelHead>
                  <PanelText>No builds in the queue.</PanelText>
                </Panel>
                <Panel>
                  <PanelHead $h={25}><Link $track={-0.05}>Build Executor Status</Link></PanelHead>
                  <ExecRow $head $h={18}>
                    <ExecCell $first $top={2}>#</ExecCell>
                    <ExecCell $center $top={2}>Status</ExecCell>
                  </ExecRow>
                  {[24, 24, 23, 24, 24].map((h, i) => {
                    const top = i === 0 || i === 3 ? 5 : 4;
                    return (
                      <ExecRow key={i} $h={h}>
                        <ExecCell $first $top={top}>{i + 1}</ExecCell>
                        <ExecCell $top={top}>Idle</ExecCell>
                        <ExecCell />
                      </ExecRow>
                    );
                  })}
                </Panel>
              </Side>
              <Main>
                <Description><Small name="edit" /><Link $track={-0.25}>add description</Link></Description>
                <Tabs>
                  {tabs.map(([label, w, track], i) => (
                    <Tab key={label} $w={w} $track={track} $active={label === "All"} $bare={i === 2} $last={i === tabs.length - 1}>{label}</Tab>
                  ))}
                </Tabs>
                <Table>
                  <HeadRow>
                    <HeadCell $pad={17}>S</HeadCell>
                    <HeadCell $pad={18}>W</HeadCell>
                    <HeadCell>Name <SortArrow /></HeadCell>
                    <HeadCell>Last Success</HeadCell>
                    <HeadCell>Last Failure</HeadCell>
                    <HeadCell>Last Duration</HeadCell>
                  </HeadRow>
                  {jobs.map((job, i) => <Job key={job[2]} job={job} index={i} />)}
                </Table>
              </Main>
            </Columns>
            <Tip>Disabled</Tip>
          </Page>
          <ScrollBar>
            <ScrollButton><Arrow $up /></ScrollButton>
            <Thumb />
            <ScrollButton><Arrow /></ScrollButton>
          </ScrollBar>
        </Viewport>
      </Browser>
      <WindowEdge />
    </Window>
  );
}
